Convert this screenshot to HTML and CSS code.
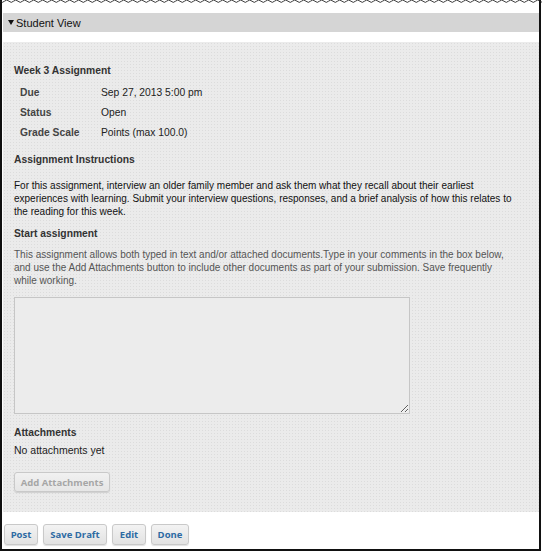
FILE: index.html
```html
<!DOCTYPE html>
<html>
<head>
<meta charset="utf-8">
<link rel="stylesheet" href="styles.css">
</head>
<body>
<div class="frame">
  <svg class="tear" width="542" height="4" viewBox="0 0 542 4">
    <defs>
      <pattern id="wave" width="9" height="4" patternUnits="userSpaceOnUse">
        <path d="M0 1.2 Q2.25 3.6 4.5 1.2 T9 1.2" fill="none" stroke="#222" stroke-width="0.9"/>
      </pattern>
    </defs>
    <rect x="0" y="0" width="542" height="4" fill="url(#wave)"/>
  </svg>
  <div class="bar"><span class="caret"></span>Student View</div>
  <div class="panel">
    <h3 class="title">Week 3 Assignment</h3>
    <div class="meta">
      <div class="row"><span class="label">Due</span><span class="value">Sep 27, 2013 5:00 pm</span></div>
      <div class="row"><span class="label">Status</span><span class="value">Open</span></div>
      <div class="row"><span class="label">Grade Scale</span><span class="value">Points (max 100.0)</span></div>
    </div>
    <h3 class="section instr-head">Assignment Instructions</h3>
    <p class="instr">For this assignment, interview an older family member and ask them what they recall about their earliest experiences with learning. Submit your interview questions, responses, and a brief analysis of how this relates to the reading for this week.</p>
    <h3 class="section start-head">Start assignment</h3>
    <p class="note">This assignment allows both typed in text and/or attached documents.Type in your comments in the box below, and use the Add Attachments button to include other documents as part of your submission. Save frequently while working.</p>
    <textarea class="answer"></textarea>
    <h3 class="section att-head">Attachments</h3>
    <p class="none">No attachments yet</p>
    <button class="btn add" disabled>Add Attachments</button>
  </div>
  <div class="actions">
    <button class="btn act post">Post</button>
    <button class="btn act draft">Save Draft</button>
    <button class="btn act edit">Edit</button>
    <button class="btn act done">Done</button>
  </div>
</div>
</body>
</html>
```

FILE: styles.css
```css
html, body {
  margin: 0;
  padding: 0;
  background: #fff;
}
.frame {
  position: relative;
  width: 541px;
  height: 551px;
  box-sizing: border-box;
  border-left: 2px solid #111;
  border-right: 2px solid #111;
  border-bottom: 2px solid #111;
  padding: 13px 0 0 1px;
  font-family: "Liberation Sans", Arial, Helvetica, sans-serif;
  font-size: 10.3px;
  color: #222;
}
.tear {
  position: absolute;
  left: -2px;
  top: 0;
  display: block;
}
.bar {
  display: flex;
  align-items: center;
  height: 19px;
  background: #d5d5d5;
  font-size: 11px;
  color: #111;
  padding-left: 5px;
}
.caret {
  width: 0;
  height: 0;
  border-left: 3.5px solid transparent;
  border-right: 3.5px solid transparent;
  border-top: 5px solid #111;
  margin-right: 2px;
  margin-top: -1px;
}
.panel {
  margin-top: 10px;
  height: 470px;
  box-sizing: border-box;
  padding: 22px 0 0 11px;
  background-color: #ebebeb;
  background-image: radial-gradient(circle, #dcdcdc 0.7px, transparent 0.9px);
  background-size: 3px 3px;
}
h3 {
  margin: 0;
  font-size: 10.3px;
  line-height: 13px;
  font-weight: bold;
  color: #333;
}
.meta {
  margin-top: 5px;
}
.row {
  display: flex;
  height: 20px;
  align-items: center;
}
.label {
  width: 81px;
  padding-left: 6px;
  font-weight: bold;
  color: #444;
}
.value {
  color: #222;
}
.instr-head {
  margin-top: 11px;
}
p {
  margin: 0;
  line-height: 13px;
}
.instr {
  margin-top: 13px;
  width: 503px;
  font-size: 10px;
  color: #111;
}
.start-head {
  margin-top: 9px;
}
.note {
  margin-top: 8px;
  width: 503px;
  font-size: 10px;
  color: #555;
}
.answer {
  display: block;
  margin-top: 10px;
  width: 396px;
  height: 117px;
  box-sizing: border-box;
  border: 1px solid #c6c6c6;
  background: #ececec;
  padding: 2px;
  resize: vertical;
  outline: none;
}
.att-head {
  margin-top: 12px;
}
.none {
  margin-top: 5px;
  font-size: 10.5px;
  color: #222;
}
.btn {
  font-family: "Open Sans", "Liberation Sans", sans-serif;
  font-weight: bold;
  font-size: 9.5px;
  height: 21px;
  box-sizing: border-box;
  padding: 0 7px;
  border: 1px solid #c9c9c9;
  border-radius: 3px;
  background: linear-gradient(#f3f3f3, #e2e2e2);
  box-shadow: 0 1px 1px rgba(0, 0, 0, 0.12);
  cursor: pointer;
}
.add {
  display: block;
  margin-top: 15px;
  height: 20px;
  width: 96px;
  padding: 0;
  color: #a6a6a6;
  background: linear-gradient(#f1f1f1, #e6e6e6);
}
.actions {
  display: flex;
  gap: 5px;
  margin-top: 12px;
  padding-left: 1px;
}
.act {
  color: #2d6aa3;
  padding: 0;
}
.post { width: 34px; }
.draft { width: 64px; }
.edit { width: 34px; }
.done { width: 38px; }
```
